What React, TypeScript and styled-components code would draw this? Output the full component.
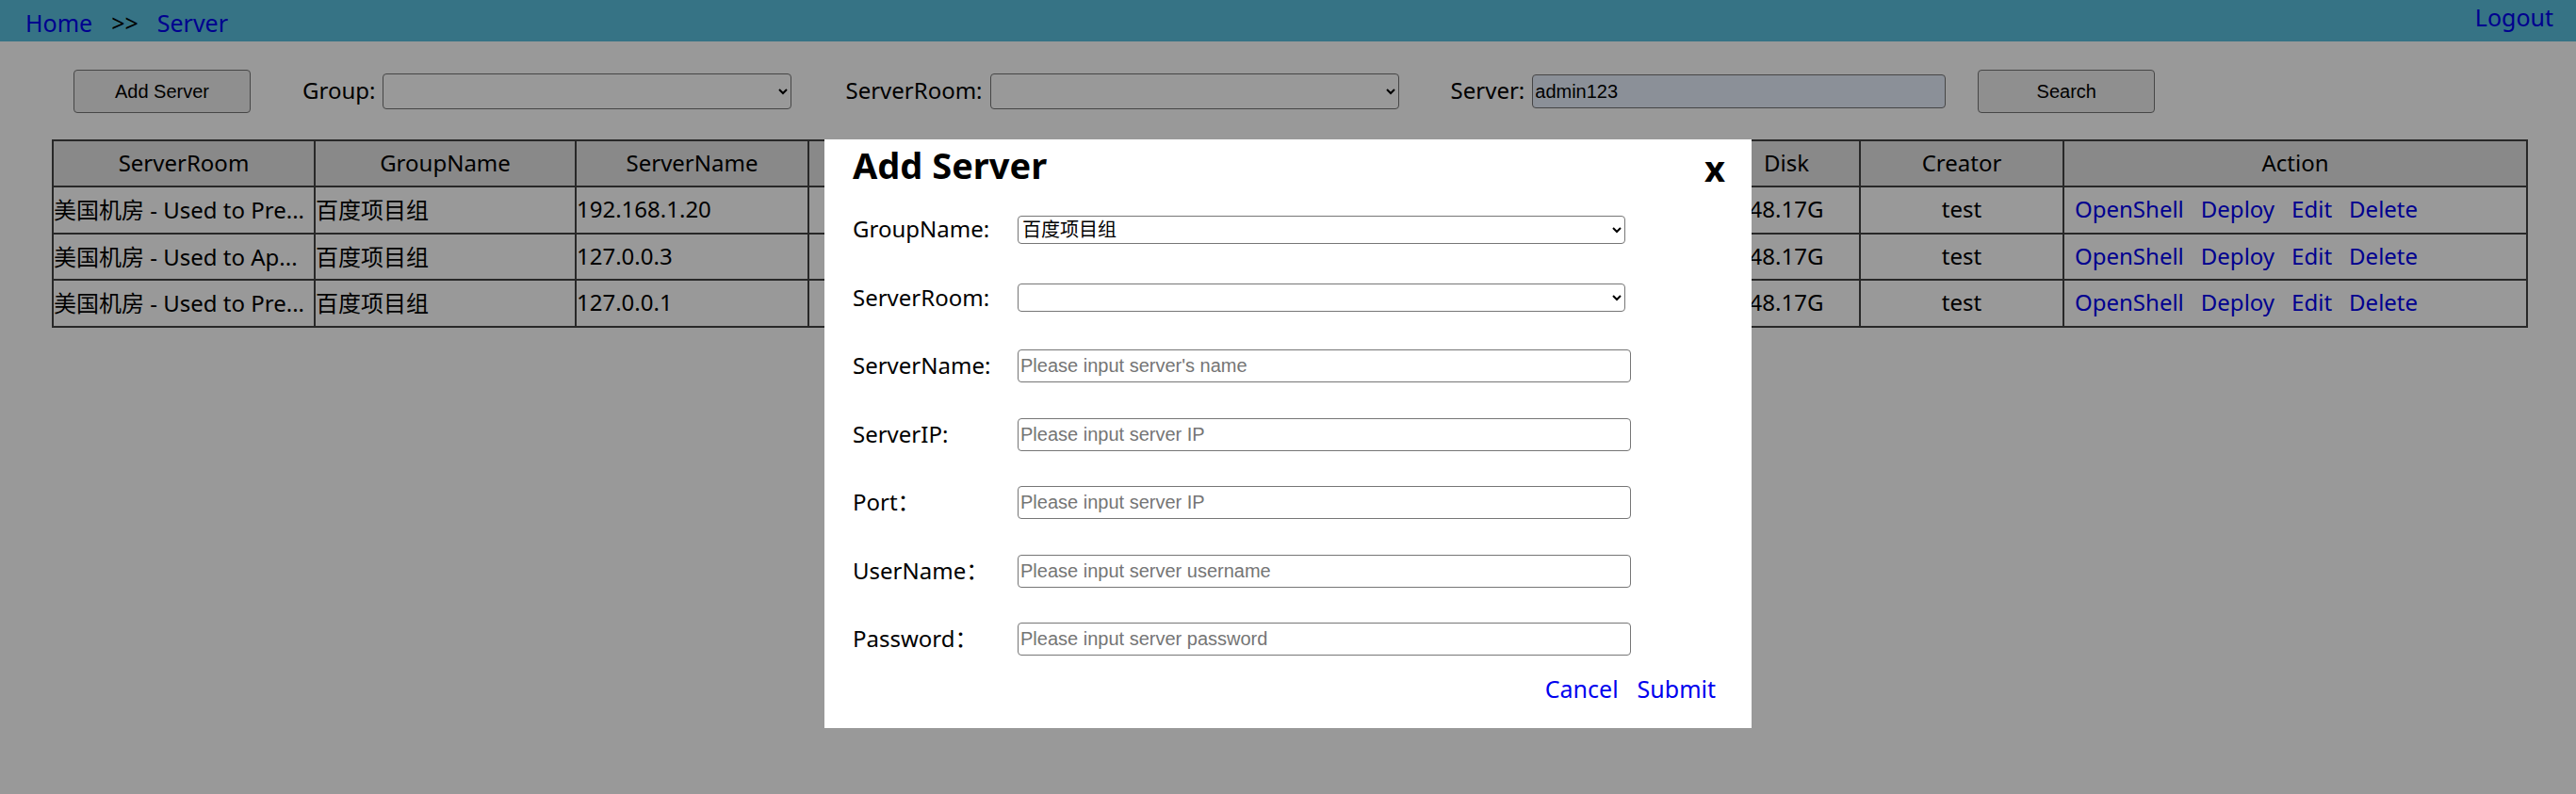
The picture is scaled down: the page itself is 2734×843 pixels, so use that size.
import React from "react";
import styled, { createGlobalStyle } from "styled-components";

const GlobalStyle = createGlobalStyle`
  html, body { margin: 0; padding: 0; background: #ffffff; }
  body {
    font-family: "Noto Sans", "Noto Sans CJK SC", sans-serif;
    color: #000;
  }
  * { box-sizing: border-box; }
`;

const Page = styled.div`
  width: 2734px;
  min-height: 843px;
`;

const TopBar = styled.header`
  height: 44px;
  background: #5bc0de;
  display: flex;
  justify-content: space-between;
  align-items: flex-start;
  padding: 0 24px 0 27px;
  font-size: 25px;
  line-height: 34px;
`;

const Crumbs = styled.nav`
  display: flex;
  gap: 20px;
  margin-top: 7px;
`;

const Link = styled.a`
  color: #0000ee;
  text-decoration: none;
  cursor: pointer;
`;

const Logout = styled(Link)`
  margin-top: 1px;
`;

const Toolbar = styled.div`
  display: flex;
  align-items: center;
  padding: 30px 0 28px 78px;
`;

const Button = styled.button<{ $gap?: number }>`
  width: 188px;
  height: 46px;
  margin-left: ${(p) => p.$gap ?? 0}px;
  font: 20px "Liberation Sans", Arial, sans-serif;
  color: #000;
  background: #efefef;
  border: 1px solid #767676;
  border-radius: 4px;
  padding: 0;
`;

const FilterLabel = styled.label<{ $gap: number }>`
  font-size: 24px;
  line-height: 33px;
  margin-left: ${(p) => p.$gap}px;
  margin-right: 8px;
  margin-bottom: 3px;
`;

const FilterSelect = styled.select`
  width: 434px;
  height: 38px;
  font: 20px "Liberation Sans", Arial, sans-serif;
  background: #fff;
  border: 1px solid #767676;
  border-radius: 4px;
`;

const FilterInput = styled.input`
  width: 439px;
  height: 36px;
  font: 20px "Liberation Sans", Arial, sans-serif;
  color: #000;
  background: #e8f0fe;
  border: 1px solid #767676;
  border-radius: 4px;
  padding: 0 2px;
  outline: none;
`;

const Table = styled.table`
  margin: 0 53px 0 55px;
  width: 2626px;
  border-collapse: collapse;
  table-layout: fixed;
  font-size: 24px;
`;

const Th = styled.th`
  height: 49px;
  background: #e5e5e5;
  border: 2px solid #444;
  font-weight: normal;
  text-align: center;
  padding: 0 0 3px;
  white-space: nowrap;
  overflow: hidden;
`;

const Td = styled.td<{ $center?: boolean }>`
  height: 49.5px;
  border: 2px solid #444;
  padding: 0 0 2px;
  text-align: ${(p) => (p.$center ? "center" : "left")};
  white-space: nowrap;
  overflow: hidden;
`;

const Actions = styled.div`
  display: flex;
  gap: 18px;
  padding-left: 11px;
`;

const Overlay = styled.div`
  position: fixed;
  inset: 0;
  background: rgba(0, 0, 0, 0.4);
  display: flex;
  justify-content: center;
  align-items: flex-start;
  padding-top: 148px;
`;

const Modal = styled.div`
  width: 984px;
  height: 625px;
  background: #fff;
  padding: 1px 28px 0 30px;
  display: flex;
  flex-direction: column;
`;

const ModalHead = styled.div`
  display: flex;
  justify-content: space-between;
  align-items: flex-start;
`;

const Title = styled.h2`
  margin: 0;
  font-size: 38px;
  line-height: 52px;
  font-weight: 700;
`;

const Close = styled.span`
  font-size: 38px;
  line-height: 52px;
  font-weight: 700;
  margin-top: 3px;
  cursor: pointer;
`;

const Form = styled.div`
  margin-top: 22px;
  display: flex;
  flex-direction: column;
  gap: 37.5px;
`;

const Row = styled.div`
  display: flex;
  align-items: center;
`;

const FieldLabel = styled.label`
  width: 175px;
  font-size: 24px;
  line-height: 33px;
  margin-bottom: 2px;
`;

const FieldSelect = styled.select`
  width: 645px;
  height: 30px;
  font: 20px "Liberation Sans", "Noto Sans CJK SC", sans-serif;
  color: #000;
  background: #fff;
  border: 1px solid #767676;
  border-radius: 4px;
`;

const FieldInput = styled.input`
  width: 651px;
  height: 35px;
  font: 20px "Liberation Sans", Arial, sans-serif;
  border: 1px solid #767676;
  border-radius: 4px;
  padding: 0 2px;
  &::placeholder { color: #757575; }
`;

const Footer = styled.div`
  margin-top: 18px;
  margin-right: 10px;
  display: flex;
  justify-content: flex-end;
  gap: 20px;
  font-size: 25px;
  line-height: 34px;
`;

const columns = [278, 277, 247, 247, 156, 277, 125, 155, 156, 216, 492];
const headers = [
  "ServerRoom",
  "GroupName",
  "ServerName",
  "ServerIP",
  "Port",
  "UserName",
  "CPU",
  "Memory",
  "Disk",
  "Creator",
  "Action",
];

const rows = [
  { room: "美国机房 - Used to Pre...", name: "192.168.1.20", ip: "192.168.1.20" },
  { room: "美国机房 - Used to Ap...", name: "127.0.0.3", ip: "127.0.0.3" },
  { room: "美国机房 - Used to Pre...", name: "127.0.0.1", ip: "127.0.0.1" },
];

const fields = [
  { label: "ServerName:", placeholder: "Please input server's name" },
  { label: "ServerIP:", placeholder: "Please input server IP" },
  { label: "Port：", placeholder: "Please input server IP" },
  { label: "UserName：", placeholder: "Please input server username" },
  { label: "Password：", placeholder: "Please input server password" },
];

export default function App() {
  return (
    <Page>
      <GlobalStyle />
      <TopBar>
        <Crumbs>
          <Link>Home</Link>
          <span>&gt;&gt;</span>
          <Link>Server</Link>
        </Crumbs>
        <Logout>Logout</Logout>
      </TopBar>

      <Toolbar>
        <Button>Add Server</Button>
        <FilterLabel $gap={55}>Group:</FilterLabel>
        <FilterSelect defaultValue="">
          <option value=""></option>
        </FilterSelect>
        <FilterLabel $gap={57}>ServerRoom:</FilterLabel>
        <FilterSelect defaultValue="">
          <option value=""></option>
        </FilterSelect>
        <FilterLabel $gap={55}>Server:</FilterLabel>
        <FilterInput defaultValue="admin123" />
        <Button $gap={34}>Search</Button>
      </Toolbar>

      <Table>
        <colgroup>
          {columns.map((w, i) => (
            <col key={i} style={{ width: w }} />
          ))}
        </colgroup>
        <thead>
          <tr>
            {headers.map((h) => (
              <Th key={h}>{h}</Th>
            ))}
          </tr>
        </thead>
        <tbody>
          {rows.map((r, i) => (
            <tr key={i}>
              <Td>{r.room}</Td>
              <Td>百度项目组</Td>
              <Td>{r.name}</Td>
              <Td $center>{r.ip}</Td>
              <Td $center>22</Td>
              <Td $center>root</Td>
              <Td $center>4</Td>
              <Td $center>7.64G</Td>
              <Td $center>48.17G</Td>
              <Td $center>test</Td>
              <Td>
                <Actions>
                  <Link>OpenShell</Link>
                  <Link>Deploy</Link>
                  <Link>Edit</Link>
                  <Link>Delete</Link>
                </Actions>
              </Td>
            </tr>
          ))}
        </tbody>
      </Table>

      <Overlay>
        <Modal>
          <ModalHead>
            <Title>Add Server</Title>
            <Close>x</Close>
          </ModalHead>
          <Form>
            <Row>
              <FieldLabel>GroupName:</FieldLabel>
              <FieldSelect defaultValue="baidu">
                <option value="baidu">百度项目组</option>
              </FieldSelect>
            </Row>
            <Row>
              <FieldLabel>ServerRoom:</FieldLabel>
              <FieldSelect defaultValue="">
                <option value=""></option>
              </FieldSelect>
            </Row>
            {fields.map((f) => (
              <Row key={f.label}>
                <FieldLabel>{f.label}</FieldLabel>
                <FieldInput placeholder={f.placeholder} />
              </Row>
            ))}
          </Form>
          <Footer>
            <Link>Cancel</Link>
            <Link>Submit</Link>
          </Footer>
        </Modal>
      </Overlay>
    </Page>
  );
}
